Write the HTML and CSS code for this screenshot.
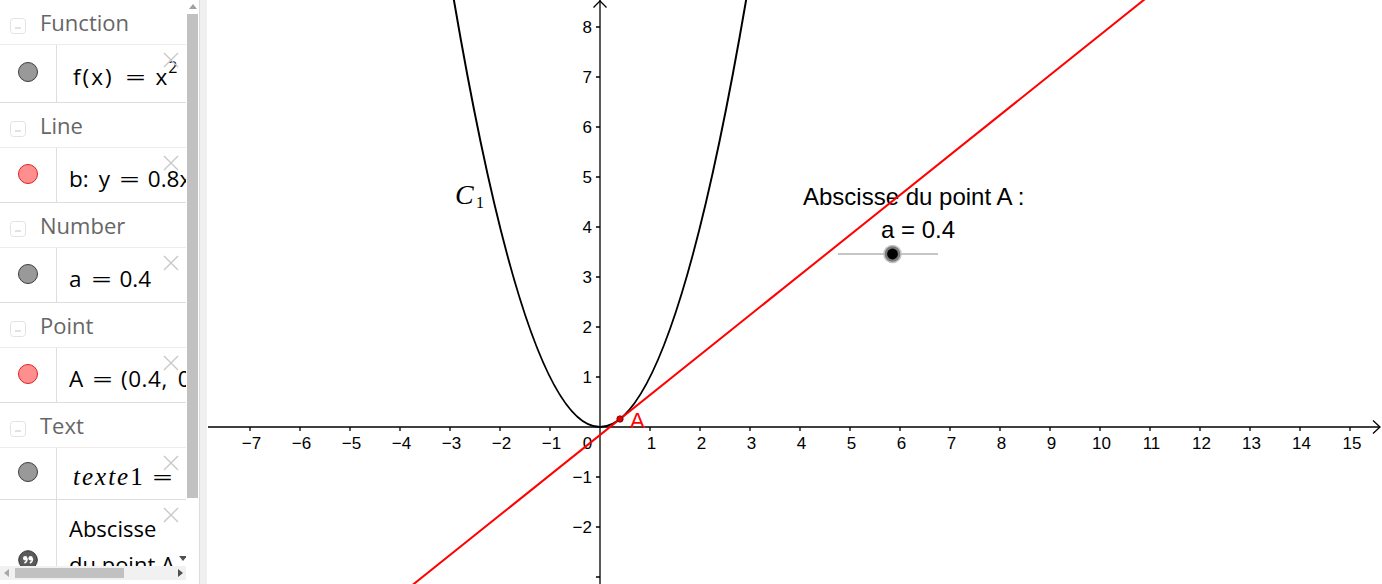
FILE: index.html
```html
<!DOCTYPE html>
<html lang="fr">
<head>
<meta charset="utf-8">
<title>GeoGebra</title>
<link rel="stylesheet" href="styles.css">
</head>
<body>
<div class="app">
  <aside class="algebra">
    <div class="av-main">
      <div class="av-list">

        <div class="av-head">
          <svg class="collapse" width="16" height="16" viewBox="0 0 16 16"><rect x="0.5" y="0.5" width="15" height="15" rx="3" fill="#fff" stroke="#e2e2e2"/><line x1="5" y1="10" x2="11" y2="10" stroke="#cfcfcf" stroke-width="1.2"/></svg>
          <span class="av-title">Function</span>
        </div>
        <div class="item item-first">
          <div class="marble-cell"><span class="marble gray"></span></div>
          <div class="item-text math shift"><span class="fx">f(x)</span><span class="eq wide">=</span>x<sup class="sup">2</sup></div>
          <span class="close"><svg width="16" height="16" viewBox="0 0 16 16"><path d="M1 1L15 15M15 1L1 15" stroke="#c8c8c8" stroke-width="1.4"/></svg></span>
        </div>

        <div class="av-head">
          <svg class="collapse" width="16" height="16" viewBox="0 0 16 16"><rect x="0.5" y="0.5" width="15" height="15" rx="3" fill="#fff" stroke="#e2e2e2"/><line x1="5" y1="10" x2="11" y2="10" stroke="#cfcfcf" stroke-width="1.2"/></svg>
          <span class="av-title">Line</span>
        </div>
        <div class="item">
          <div class="marble-cell"><span class="marble red"></span></div>
          <div class="item-text math">b:<span class="msp"></span>y<span class="eq">=</span>0.8x − 0.16</div>
          <span class="close"><svg width="16" height="16" viewBox="0 0 16 16"><path d="M1 1L15 15M15 1L1 15" stroke="#c8c8c8" stroke-width="1.4"/></svg></span>
        </div>

        <div class="av-head">
          <svg class="collapse" width="16" height="16" viewBox="0 0 16 16"><rect x="0.5" y="0.5" width="15" height="15" rx="3" fill="#fff" stroke="#e2e2e2"/><line x1="5" y1="10" x2="11" y2="10" stroke="#cfcfcf" stroke-width="1.2"/></svg>
          <span class="av-title">Number</span>
        </div>
        <div class="item">
          <div class="marble-cell"><span class="marble gray"></span></div>
          <div class="item-text math">a<span class="eq">=</span>0.4</div>
          <span class="close"><svg width="16" height="16" viewBox="0 0 16 16"><path d="M1 1L15 15M15 1L1 15" stroke="#c8c8c8" stroke-width="1.4"/></svg></span>
        </div>

        <div class="av-head">
          <svg class="collapse" width="16" height="16" viewBox="0 0 16 16"><rect x="0.5" y="0.5" width="15" height="15" rx="3" fill="#fff" stroke="#e2e2e2"/><line x1="5" y1="10" x2="11" y2="10" stroke="#cfcfcf" stroke-width="1.2"/></svg>
          <span class="av-title">Point</span>
        </div>
        <div class="item">
          <div class="marble-cell"><span class="marble red"></span></div>
          <div class="item-text math">A<span class="eq">=</span><span class="pt">(0.4,</span><span class="msp"></span>0.16)</div>
          <span class="close"><svg width="16" height="16" viewBox="0 0 16 16"><path d="M1 1L15 15M15 1L1 15" stroke="#c8c8c8" stroke-width="1.4"/></svg></span>
        </div>

        <div class="av-head">
          <svg class="collapse" width="16" height="16" viewBox="0 0 16 16"><rect x="0.5" y="0.5" width="15" height="15" rx="3" fill="#fff" stroke="#e2e2e2"/><line x1="5" y1="10" x2="11" y2="10" stroke="#cfcfcf" stroke-width="1.2"/></svg>
          <span class="av-title">Text</span>
        </div>
        <div class="item item-short">
          <div class="marble-cell"><span class="marble gray"></span></div>
          <div class="item-text math shift"><span class="latex">texte</span><span class="latex-num">1</span><span class="eq">=</span></div>
          <span class="close"><svg width="16" height="16" viewBox="0 0 16 16"><path d="M1 1L15 15M15 1L1 15" stroke="#c8c8c8" stroke-width="1.4"/></svg></span>
        </div>
        <div class="item item-text-obj">
          <div class="marble-cell top">
            <svg class="quote" width="20" height="20" viewBox="0 0 20 20"><circle cx="10" cy="10" r="9.3" fill="#5a5a5a" stroke="#333" stroke-width="1"/><circle cx="7.2" cy="8.3" r="2.2" fill="#fff"/><path d="M9.2 8.6 Q9 12 6.4 13" stroke="#fff" stroke-width="1.4" fill="none"/><circle cx="12.6" cy="8.3" r="2.2" fill="#fff"/><path d="M14.6 8.6 Q14.4 12 11.8 13" stroke="#fff" stroke-width="1.4" fill="none"/></svg>
          </div>
          <div class="item-text wrap">Abscisse du point A :</div>
          <span class="close"><svg width="16" height="16" viewBox="0 0 16 16"><path d="M1 1L15 15M15 1L1 15" stroke="#c8c8c8" stroke-width="1.4"/></svg></span>
        </div>

      </div>
      <div class="hscroll">
        <span class="harrow"><svg width="6" height="8" viewBox="0 0 6 8"><path d="M5 0L0 4L5 8Z" fill="#a8a8a8"/></svg></span>
        <span class="hthumb"></span>
        <span class="hspace"></span>
        <span class="harrow"><svg width="6" height="8" viewBox="0 0 6 8"><path d="M1 0L6 4L1 8Z" fill="#505050"/></svg></span>
      </div>
      <span class="vdown"><svg width="8" height="6" viewBox="0 0 8 6"><path d="M0 1L8 1L4 6Z" fill="#505050"/></svg></span>
    </div>
    <div class="vscroll">
      <span class="varrow"><svg width="8" height="6" viewBox="0 0 8 6"><path d="M0 5L8 5L4 0Z" fill="#a0a0a0"/></svg></span>
      <span class="vthumb"></span>
    </div>
  </aside>
  <div class="splitter"></div>
  <main class="graphics">
    <svg class="canvas" width="1175" height="584" viewBox="207 0 1175 584">
      <!-- axes -->
      <g stroke="#000" stroke-width="1.3" fill="none">
        <line x1="208" y1="427" x2="1380" y2="427"/>
        <path d="M1373 420.5L1380 427L1373 433.5"/>
        <line x1="600" y1="0" x2="600" y2="584"/>
        <path d="M593.5 7.5L600 1L606.5 7.5"/>
        <path d="M250 427V431M300 427V431M350 427V431M400 427V431M450 427V431M500 427V431M550 427V431M650 427V431M700 427V431M750 427V431M800 427V431M850 427V431M900 427V431M950 427V431M1000 427V431M1050 427V431M1100 427V431M1150 427V431M1200 427V431M1250 427V431M1300 427V431M1350 427V431"/>
        <path d="M596 377H600M596 327H600M596 277H600M596 227H600M596 177H600M596 127H600M596 77H600M596 27H600M596 477H600M596 527H600M596 577H600"/>
      </g>
      <g font-family="Liberation Sans, Arial, sans-serif" font-size="17" fill="#000" text-anchor="middle">
        <text x="251.5" y="449">−7</text>
        <text x="301.5" y="449">−6</text>
        <text x="351.5" y="449">−5</text>
        <text x="401.5" y="449">−4</text>
        <text x="451.5" y="449">−3</text>
        <text x="501.5" y="449">−2</text>
        <text x="551.5" y="449">−1</text>
        <text x="587.5" y="449">0</text>
        <text x="651.5" y="449">1</text>
        <text x="701.5" y="449">2</text>
        <text x="751.5" y="449">3</text>
        <text x="801.5" y="449">4</text>
        <text x="851.5" y="449">5</text>
        <text x="901.5" y="449">6</text>
        <text x="951.5" y="449">7</text>
        <text x="1001.5" y="449">8</text>
        <text x="1051.5" y="449">9</text>
        <text x="1101.5" y="449">10</text>
        <text x="1151.5" y="449">11</text>
        <text x="1201.5" y="449">12</text>
        <text x="1251.5" y="449">13</text>
        <text x="1301.5" y="449">14</text>
        <text x="1352" y="449">15</text>
      </g>
      <g font-family="Liberation Sans, Arial, sans-serif" font-size="17" fill="#000" text-anchor="end">
        <text x="592" y="33">8</text>
        <text x="592" y="83">7</text>
        <text x="592" y="133">6</text>
        <text x="592" y="183">5</text>
        <text x="592" y="233">4</text>
        <text x="592" y="283">3</text>
        <text x="592" y="333">2</text>
        <text x="592" y="383">1</text>
        <text x="592" y="483">−1</text>
        <text x="592" y="533">−2</text>
      </g>
      <!-- text & slider -->
      <g font-family="Liberation Sans, Arial, sans-serif" font-size="24" fill="#000">
        <text x="803" y="205">Abscisse du point A :</text>
        <text x="881" y="238">a = 0.4</text>
      </g>
      <line x1="838" y1="254" x2="938" y2="254" stroke="#8c8c8c" stroke-width="1"/>
      <circle cx="892.5" cy="254" r="9.3" fill="#c4c4c4"/>
      <circle cx="892.5" cy="254" r="7.8" fill="#7a7a7a"/>
      <circle cx="892.5" cy="254" r="5.4" fill="#000"/>
      <!-- curves -->
      <path d="M450 -23Q600 877 750 -23" stroke="#000" stroke-width="2" fill="none"/>
      <line x1="350" y1="635" x2="1200" y2="-45" stroke="#ff0000" stroke-width="2"/>
      <circle cx="620" cy="419" r="3.2" fill="#e00000" stroke="#600" stroke-width="0.8"/>
      <text x="630" y="428" font-family="Liberation Sans, Arial, sans-serif" font-size="22" fill="#ff0000">A</text>
      <text x="455" y="204" font-family="Liberation Serif, Times New Roman, serif" font-size="28" font-style="italic" fill="#000">C</text>
      <text x="476" y="208" font-family="Liberation Serif, Times New Roman, serif" font-size="16" fill="#000">1</text>
    </svg>
  </main>
</div>
</body>
</html>
```
FILE: styles.css
```css
html, body {
  margin: 0;
  padding: 0;
  background: #fff;
}

body {
  font-family: "Open Sans", "Noto Sans", sans-serif;
  color: #000;
}

.app {
  display: flex;
  width: 1382px;
  height: 584px;
  overflow: hidden;
}

/* ---------- algebra view ---------- */
.algebra {
  display: flex;
  flex: none;
  height: 584px;
}

.av-main {
  position: relative;
  width: 186px;
  display: flex;
  flex-direction: column;
  overflow: hidden;
}

.av-list {
  flex: 1;
  overflow: hidden;
}

.av-head {
  height: 45px;
  box-sizing: border-box;
  display: flex;
  align-items: center;
  border-bottom: 1px solid #f1eaea;
  white-space: nowrap;
}

.collapse {
  flex: none;
  margin: 8px 14px 0 10px;
}

.av-title {
  font-size: 22px;
  line-height: 45px;
  color: #666;
}

.item {
  position: relative;
  display: flex;
  height: 55px;
  box-sizing: border-box;
  border-bottom: 1px solid #dedede;
}

.item-first {
  height: 58px;
}

.item-short {
  height: 52px;
}

.item-text-obj {
  height: 140px;
}

.marble-cell {
  flex: none;
  width: 57px;
  box-sizing: border-box;
  border-right: 1px solid #dedede;
  display: flex;
  align-items: center;
  justify-content: center;
  padding-bottom: 3px;
}

.marble-cell.top {
  align-items: flex-start;
  padding: 50px 0 0 0;
}

.marble {
  width: 18px;
  height: 18px;
  border-radius: 50%;
  box-sizing: content-box;
}

.marble.gray {
  background: #999;
  border: 1px solid #3c3c3c;
}

.marble.red {
  background: #ff8f8f;
  border: 1px solid #e02020;
}

.item-text {
  flex: 1;
  min-width: 0;
  padding: 14px 0 0 12px;
  font-size: 22px;
  line-height: 33px;
  white-space: nowrap;
  color: #000;
}

.item-text.math {
  font-size: 22.5px;
}

.item-first .item-text {
  padding-top: 15px;
}

.item-short .item-text {
  padding-top: 12px;
}

.item-text.shift {
  padding-left: 16px;
}

.item-text.wrap {
  white-space: normal;
  line-height: 36px;
  padding-top: 10px;
  padding-right: 6px;
}

.fx {
  letter-spacing: 2px;
}

.pt {
  letter-spacing: 0.5px;
}

.msp {
  display: inline-block;
  width: 10px;
}

.eq {
  display: inline-block;
  margin: 0 12px 0 13px;
  transform: scaleX(1.6);
}

.eq.wide {
  margin: 0 14px 0 15px;
}

.sup {
  font-size: 16px;
  line-height: 0;
  vertical-align: 12px;
  margin-left: 1px;
}

.latex {
  font-family: "Liberation Serif", "Times New Roman", serif;
  font-style: italic;
  font-size: 25px;
  letter-spacing: 2px;
}

.latex-num {
  font-family: "Liberation Serif", "Times New Roman", serif;
  font-size: 25px;
}

.close {
  position: absolute;
  top: 7px;
  right: 7px;
  width: 16px;
  height: 16px;
  display: block;
}

.close svg {
  display: block;
}

.quote {
  display: block;
}

/* scrollbars */
.hscroll {
  flex: none;
  height: 14px;
  margin-bottom: 4px;
  background: #f1f1f1;
  display: flex;
  align-items: center;
}

.harrow {
  flex: none;
  width: 13px;
  display: flex;
  justify-content: center;
  align-items: center;
}

.hthumb {
  flex: none;
  width: 109px;
  height: 10px;
  margin-left: 2px;
  background: #c1c1c1;
}

.hspace {
  flex: 1;
}

.vdown {
  position: absolute;
  left: 179px;
  top: 555px;
  display: block;
}

.vdown svg,
.varrow svg,
.harrow svg {
  display: block;
}

.vscroll {
  flex: none;
  width: 13px;
  display: flex;
  flex-direction: column;
  align-items: flex-end;
}

.varrow {
  height: 14px;
  width: 12px;
  display: flex;
  justify-content: center;
  align-items: center;
}

.vthumb {
  width: 11px;
  height: 484px;
  margin-right: 1px;
  background: #c1c1c1;
}

.splitter {
  flex: none;
  width: 8px;
  box-sizing: border-box;
  border-left: 1px solid #dcdcdc;
  background: #f0f0f0;
}

/* ---------- graphics view ---------- */
.graphics {
  flex: 1;
  min-width: 0;
  height: 584px;
  overflow: hidden;
}

.canvas {
  display: block;
}
```
